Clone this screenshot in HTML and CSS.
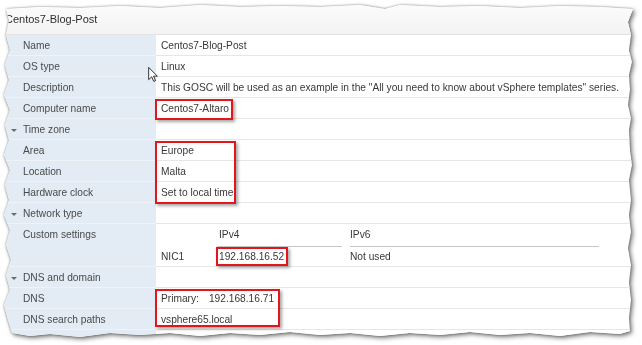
FILE: index.html
```html
<!DOCTYPE html>
<html lang="en">
<head>
    <meta charset="UTF-8">
    <meta name="viewport" content="width=device-width, initial-scale=1.0">
    <title>Centos7-Blog-Post</title>
    <link rel="stylesheet" href="styles.css">
</head>
<body>
    <div class="sheet">
        <div class="page">
            <div class="title">Centos7-Blog-Post</div>
            <div class="props">
                <div class="row"><div class="key">Name</div><div class="val">Centos7-Blog-Post</div></div>
                <div class="row"><div class="key">OS type</div><div class="val">Linux</div></div>
                <div class="row"><div class="key">Description</div><div class="val">This GOSC will be used as an example in the "All you need to know about vSphere templates" series.</div></div>
                <div class="row"><div class="key">Computer name</div><div class="val">Centos7-Altaro</div></div>
                <div class="row group"><div class="key"><span class="caret"></span>Time zone</div><div class="val"></div></div>
                <div class="row"><div class="key">Area</div><div class="val">Europe</div></div>
                <div class="row"><div class="key">Location</div><div class="val">Malta</div></div>
                <div class="row"><div class="key">Hardware clock</div><div class="val">Set to local time</div></div>
                <div class="row group"><div class="key"><span class="caret"></span>Network type</div><div class="val"></div></div>
                <div class="row tall">
                    <div class="key">Custom settings</div>
                    <div class="val">
                        <div class="nics">
                            <div class="nh blank"></div>
                            <div class="nh v4">IPv4</div>
                            <div class="nh v6">IPv6</div>
                            <div class="nd">NIC1</div>
                            <div class="nd v4">192.168.16.52</div>
                            <div class="nd v6">Not used</div>
                        </div>
                    </div>
                </div>
                <div class="row group"><div class="key"><span class="caret"></span>DNS and domain</div><div class="val"></div></div>
                <div class="row"><div class="key">DNS</div><div class="val"><span class="dns-label">Primary:</span>192.168.16.71</div></div>
                <div class="row"><div class="key">DNS search paths</div><div class="val">vsphere65.local</div></div>
            </div>
            <div class="filler"></div>

            <span class="mark m1"></span>
            <span class="mark m2"></span>
            <span class="mark m3"></span>
            <span class="mark m4"></span>

            <svg class="cursor" width="10" height="15" viewBox="0 0 12 19">
                <path d="M0.5 0.5 L0.5 16 L4.3 12.4 L7 18.2 L9.3 17.2 L6.7 11.6 L11.5 11.6 Z" fill="#fff" stroke="#000" stroke-width="1"/>
            </svg>
        </div>
    </div>
</body>
</html>
```

FILE: styles.css
```css
body {
    margin: 0;
    background: #fff;
    font-family: "Liberation Sans", Arial, sans-serif;
    font-size: 10.2px;
    color: #383838;
}

.sheet {
    width: 642px;
    height: 345px;
    filter: drop-shadow(0 0 1px rgba(0,0,0,0.35)) drop-shadow(2px 2px 2px rgba(0,0,0,0.5));
}

.page {
    position: relative;
    width: 642px;
    height: 345px;
    display: flex;
    flex-direction: column;
    background: #fff;
    clip-path: polygon(
        6px 9px, 40px 7px, 80px 8px, 120px 6px, 160px 8px, 200px 5px, 240px 7px, 280px 6px,
        320px 7px, 360px 5px, 385px 9px, 400px 5px, 440px 7px, 480px 6px, 520px 8px, 560px 6px,
        600px 7px, 633px 9px,
        628px 22px, 631px 35px, 629px 50px, 632px 62px, 629px 75px, 630px 90px, 628px 105px,
        631px 118px, 629px 130px, 630px 150px, 632px 165px, 629px 180px, 631px 200px, 629px 215px,
        631px 232px, 628px 248px, 631px 265px, 629px 282px, 631px 300px, 629px 318px, 630px 331px,
        620px 334px, 590px 332px, 560px 336px, 530px 333px, 500px 335px, 470px 332px, 440px 335px,
        410px 333px, 380px 336px, 350px 333px, 320px 335px, 290px 332px, 260px 335px, 230px 333px,
        200px 336px, 170px 333px, 140px 335px, 110px 333px, 80px 337px, 50px 334px, 30px 336px,
        12px 333px,
        8px 320px, 4px 305px, 10px 290px, 6px 275px, 11px 260px, 6px 245px, 10px 230px, 4px 215px,
        9px 200px, 5px 185px, 10px 170px, 4px 155px, 9px 140px, 5px 125px, 10px 110px, 4px 95px,
        9px 80px, 5px 65px, 10px 50px, 6px 35px, 9px 20px
    );
}

.title {
    height: 35px;
    padding: 4px 0 0 5px;
    box-sizing: border-box;
    display: flex;
    align-items: center;
    font-size: 11px;
    color: #2e2e2e;
    background: linear-gradient(#fdfdfd, #f3f3f3);
    border-bottom: 1px solid #e2e2e2;
}

.row {
    display: grid;
    grid-template-columns: 156px 1fr;
}

.key {
    height: 19px;
    padding: 1px 0 0 23px;
    line-height: 20px;
    position: relative;
    background: #e3ecf4;
    border-bottom: 1px solid #eef3f8;
    color: #4a4a4a;
}

.val {
    height: 19px;
    padding: 1px 0 0 5px;
    line-height: 20px;
    border-bottom: 1px solid #e6e6e6;
    white-space: nowrap;
}

.caret {
    position: absolute;
    left: 11px;
    top: 10px;
    border-left: 3px solid transparent;
    border-right: 3px solid transparent;
    border-top: 3px solid #6a6a6a;
}

.tall .key {
    height: 41px;
}

.tall .val {
    height: 42px;
    padding-top: 0;
}

.nics {
    display: grid;
    grid-template-columns: 56px 125px 257px;
}

.nh {
    height: 23px;
    padding-top: 1px;
    box-sizing: border-box;
    line-height: 20px;
    border-bottom: 1px solid #c6c6c6;
}

.nh.blank {
    border-bottom-color: transparent;
}

.nd {
    padding-top: 1px;
    line-height: 18px;
}

.v4 {
    padding-left: 2px;
}

.v6 {
    margin-left: 8px;
}

.dns-label {
    margin-right: 10px;
}

.filler {
    flex: 1;
    background: linear-gradient(to right, #e3ecf4 156px, #fff 156px);
}

.mark {
    position: absolute;
    box-sizing: border-box;
    border: 2px solid #e8141c;
    box-shadow: 2px 2px 3px rgba(0,0,0,0.35);
}

.m1 { left: 155px; top: 99px; width: 78px; height: 21px; }
.m2 { left: 155px; top: 141px; width: 81px; height: 63px; }
.m3 { left: 216px; top: 247px; width: 72px; height: 19px; }
.m4 { left: 155px; top: 289px; width: 125px; height: 38px; }

.cursor {
    position: absolute;
    left: 148px;
    top: 67px;
}
```
